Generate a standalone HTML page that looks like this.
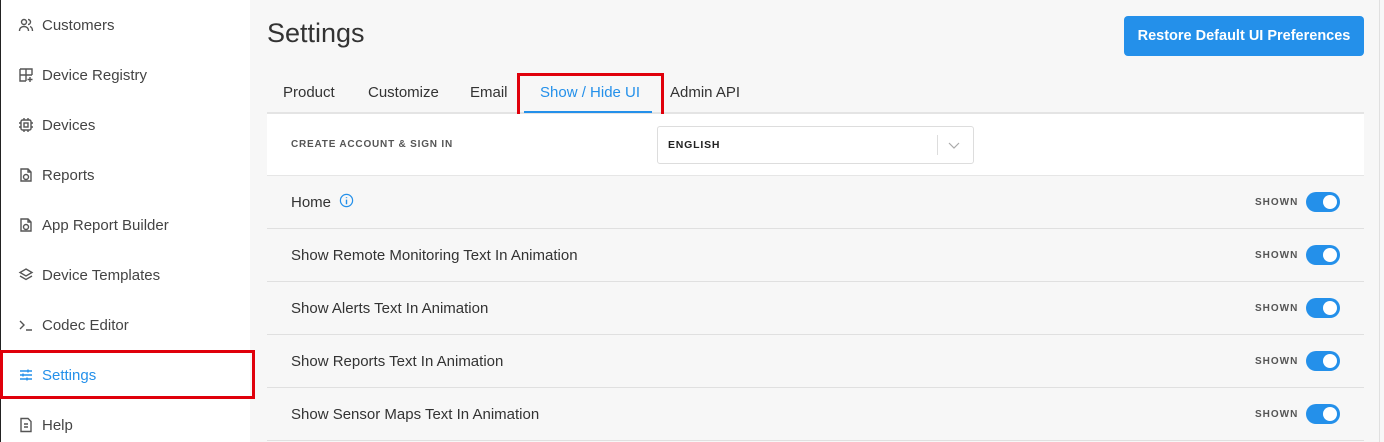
<!DOCTYPE html>
<html><head><style>
*{box-sizing:border-box;margin:0;padding:0}
body{width:1384px;height:442px;overflow:hidden;background:#f7f7f7;font-family:"Liberation Sans",sans-serif;color:#333;position:relative}
.side{position:absolute;left:0;top:0;width:250px;height:442px;background:#fff;border-left:1px solid #222}
.item{position:absolute;left:17px;height:20px;display:flex;align-items:center;font-size:15px;color:#444}
.item svg{width:16px;height:16px;margin-right:8px;fill:none;stroke:#555;stroke-width:1.4}
.red{position:absolute;border:3px solid #e0000b}
h1{position:absolute;left:267px;top:18px;font-size:27px;font-weight:normal;color:#333}
.btn{position:absolute;left:1124px;top:16px;width:240px;height:40px;background:#2490ea;border-radius:4px;color:#fff;font-size:14.5px;font-weight:bold;display:flex;align-items:center;justify-content:center}
.tab{position:absolute;top:84px;font-size:15px;color:#333}
.tabline{position:absolute;left:267px;top:112px;width:1097px;height:2px;background:#e4e4e4}
.hdr{position:absolute;left:267px;top:114px;width:1097px;height:62px;background:#fff;border-bottom:1px solid #e6e6e6}
.row{position:absolute;left:267px;width:1097px;height:53px;border-bottom:1px solid #e0e0e0;font-size:15px;color:#333}
.row span.t{position:absolute;left:24px;top:18px}
.sh{position:absolute;left:988px;top:21px;font-size:10px;font-weight:bold;letter-spacing:1px;color:#555}
.tg{position:absolute;left:1039px;top:16px;width:34px;height:20px;border-radius:10px;background:#2490ea}
.tg:after{content:"";position:absolute;right:3px;top:3px;width:14px;height:14px;border-radius:50%;background:#fff}
</style></head><body>
<div class="side">
<div class="item" style="top:15px"><svg viewBox="0 0 16 16"><circle cx="6" cy="5" r="2.5"/><path d="M1.5 14c0-3 2-4.5 4.5-4.5S10.5 11 10.5 14M10 2.5a2.5 2.5 0 010 5M12 9.5c1.5.5 2.5 2 2.5 4.5"/></svg>Customers</div>
<div class="item" style="top:65px"><svg viewBox="0 0 16 16"><path d="M2 2h12v6M2 2v12h6M2 8h12M8 2v12M12 10v5M9.5 12.5h5"/></svg>Device Registry</div>
<div class="item" style="top:115px"><svg viewBox="0 0 16 16"><rect x="3" y="3" width="10" height="10" rx="1.5"/><rect x="6" y="6" width="4" height="4"/><path d="M1 6h2M1 10h2M13 6h2M13 10h2M6 1v2M10 1v2M6 13v2M10 13v2"/></svg>Devices</div>
<div class="item" style="top:165px"><svg viewBox="0 0 16 16"><path d="M3 2h7l3 3v9H3zM10 2v3h3"/><circle cx="8" cy="10" r="2.5"/></svg>Reports</div>
<div class="item" style="top:215px"><svg viewBox="0 0 16 16"><path d="M3 2h7l3 3v9H3zM10 2v3h3"/><circle cx="8" cy="10" r="2.5"/></svg>App Report Builder</div>
<div class="item" style="top:265px"><svg viewBox="0 0 16 16"><path d="M8 2l6 3.5-6 3.5-6-3.5zM2 9l6 3.5 6-3.5"/></svg>Device Templates</div>
<div class="item" style="top:315px"><svg viewBox="0 0 16 16"><path d="M2 4l4 4-4 4M8 13h6"/></svg>Codec Editor</div>
<div class="item" style="top:365px;color:#2490ea"><svg viewBox="0 0 16 16" style="stroke:#2490ea"><path d="M2 4h12M2 8h12M2 12h12M10 2.5v3M5 6.5v3M9 10.5v3"/></svg>Settings</div>
<div class="item" style="top:415px"><svg viewBox="0 0 16 16"><path d="M3 1.5h7l3 3v10H3zM6 7h4M6 10h4"/></svg>Help</div>
</div>
<div class="red" style="left:0;top:350px;width:255px;height:49px"></div>
<div style="position:absolute;left:1379px;top:0;width:1px;height:442px;background:#e0e0e0"></div>
<h1>Settings</h1>
<div class="btn">Restore Default UI Preferences</div>
<div class="tab" style="left:283px">Product</div>
<div class="tab" style="left:368px">Customize</div>
<div class="tab" style="left:470px">Email</div>
<div class="tab" style="left:540px;color:#2490ea">Show / Hide UI</div>
<div class="tab" style="left:670px">Admin API</div>
<div class="tabline"></div>
<div style="position:absolute;left:524px;top:111px;width:128px;height:2px;background:#2490ea"></div>
<div class="red" style="left:517px;top:73px;width:147px;height:46px"></div>
<div class="hdr">
<div style="position:absolute;left:24px;top:25px;font-size:10px;font-weight:bold;letter-spacing:.8px;color:#555">CREATE ACCOUNT &amp; SIGN IN</div>
<div style="position:absolute;left:390px;top:12px;width:317px;height:38px;border:1px solid #ddd;border-radius:3px;background:#fff">
<div style="position:absolute;left:10px;top:12px;font-size:10.5px;font-weight:bold;letter-spacing:.8px;color:#222">ENGLISH</div>
<div style="position:absolute;left:279px;top:8px;width:1px;height:20px;background:#ddd"></div>
<svg style="position:absolute;left:290px;top:14px" width="12" height="10" viewBox="0 0 12 10"><path d="M1 2l5 5 5-5" fill="none" stroke="#aaa" stroke-width="1.2"/></svg>
</div></div>
<div class="row" style="top:176px"><span class="t">Home</span><svg style="position:absolute;left:72px;top:17px" width="15" height="15" viewBox="0 0 16 16"><circle cx="8" cy="8" r="6.5" fill="none" stroke="#2490ea" stroke-width="1.3"/><path d="M8 7v5M8 4.5v1" stroke="#2490ea" stroke-width="1.5"/></svg><span class="sh">SHOWN</span><div class="tg"></div></div>
<div class="row" style="top:229px"><span class="t">Show Remote Monitoring Text In Animation</span><span class="sh">SHOWN</span><div class="tg"></div></div>
<div class="row" style="top:282px"><span class="t">Show Alerts Text In Animation</span><span class="sh">SHOWN</span><div class="tg"></div></div>
<div class="row" style="top:335px"><span class="t">Show Reports Text In Animation</span><span class="sh">SHOWN</span><div class="tg"></div></div>
<div class="row" style="top:388px"><span class="t">Show Sensor Maps Text In Animation</span><span class="sh">SHOWN</span><div class="tg"></div></div>
</body></html>
